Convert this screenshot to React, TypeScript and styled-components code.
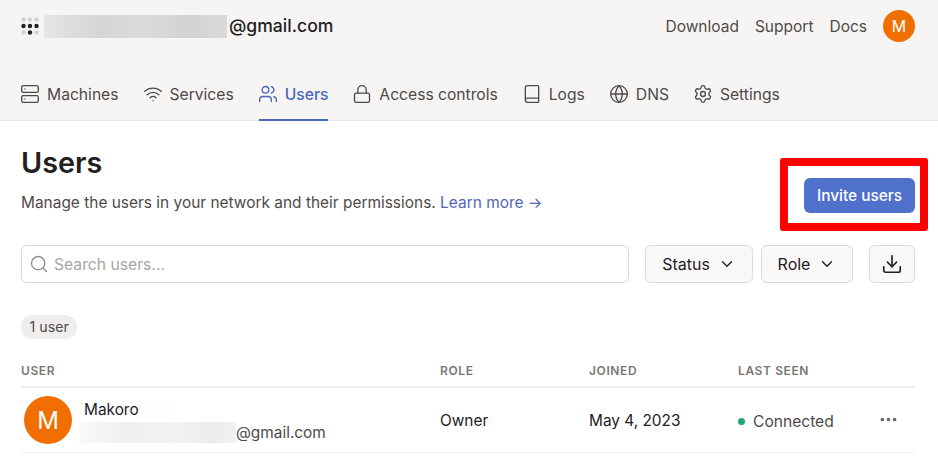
import React from 'react';
import styled, { createGlobalStyle } from 'styled-components';
import { Server, Wifi, Users, Lock, Book, Globe, Settings, Search, ChevronDown, Download, MoreHorizontal } from 'lucide-react';

const GlobalStyle = createGlobalStyle`
  html, body {
    margin: 0;
    height: 457px;
    overflow: hidden;
    background: #fff;
    font-family: Inter, "Liberation Sans", sans-serif;
    color: #24201f;
  }
`;

const Page = styled.div`
  position: relative;
  width: 938px;
  height: 457px;
  overflow: hidden;
`;

const Header = styled.header`
  height: 121px;
  box-sizing: border-box;
  background: #f6f5f4;
  border-bottom: 1px solid #e8e6e5;
  padding: 10px 23px 0 21px;
  display: flex;
  flex-direction: column;
`;

const TopRow = styled.div`
  display: flex;
  align-items: center;
  justify-content: space-between;
  height: 32px;
`;

const Account = styled.div`
  display: flex;
  align-items: center;
  font-size: 17.6px;
  font-weight: 500;
  color: #24201f;
`;

const AccountDomain = styled.span`
  margin-left: 2px;
  margin-top: -2px;
`;

const BlurEmail = styled.span<{ $width: number; $height: number; $soft?: boolean }>`
  display: inline-block;
  width: ${p => p.$width}px;
  height: ${p => p.$height}px;
  background: ${p =>
    p.$soft
      ? 'linear-gradient(90deg, #f9f9f9, #efefef 30%, #f2f2f2 60%, #ececec 85%, #f1f1f1)'
      : 'linear-gradient(90deg, #e6e5e4, #d6d5d4 30%, #dcdbda 55%, #d3d2d1 80%, #dadad9)'};
`;

const TopLinks = styled.nav`
  display: flex;
  align-items: center;
  gap: 16px;
  font-size: 15.5px;
  color: #4f4a48;
`;

const Avatar = styled.div<{ $size: number; $font: number }>`
  width: ${p => p.$size}px;
  height: ${p => p.$size}px;
  border-radius: 50%;
  flex: none;
  background: #f06f00;
  color: #fff;
  font-size: ${p => p.$font}px;
  display: flex;
  align-items: center;
  justify-content: center;
`;

const Tabs = styled.nav`
  display: flex;
  margin-top: auto;
  gap: 25px;
  height: 52px;
  margin-bottom: -1px;
`;

const Tab = styled.a<{ $active?: boolean }>`
  display: flex;
  align-items: center;
  gap: 7px;
  height: 52px;
  box-sizing: border-box;
  font-size: 15.65px;
  font-weight: ${p => (p.$active ? 500 : 400)};
  color: ${p => (p.$active ? '#4b68b8' : '#4f4a48')};
  border-bottom: 2px solid ${p => (p.$active ? '#4b68b8' : 'transparent')};

  svg {
    margin-left: -1px;
  }
`;

const Main = styled.main`
  padding: 23px 23px 0 21px;
`;

const TitleRow = styled.div`
  display: flex;
  justify-content: space-between;
  align-items: flex-start;
`;

const Title = styled.h1`
  margin: 0;
  font-size: 28.8px;
  line-height: 38px;
  font-weight: 600;
  color: #24201f;
`;

const Subtitle = styled.p`
  margin: 9px 0 0;
  font-size: 15.45px;
  line-height: 24px;
  color: #4f4a48;
`;

const LearnMore = styled.a`
  color: #5468b0;
`;

const InviteButton = styled.button`
  margin-top: 34px;
  width: 111px;
  height: 35px;
  border: none;
  border-radius: 6px;
  background: #4f71cc;
  color: #fff;
  font: 500 15.4px Inter, sans-serif;
  padding: 0;
`;

const Highlight = styled.div`
  position: absolute;
  left: 780px;
  top: 158px;
  width: 148px;
  height: 73px;
  box-sizing: border-box;
  border: 8px solid #fe0000;
  border-radius: 3px;
`;

const FilterRow = styled.div`
  display: flex;
  margin-top: 30px;
  gap: 8px;
`;

const SearchBox = styled.div`
  flex: none;
  width: 608px;
  height: 38px;
  box-sizing: border-box;
  margin-right: 8px;
  border: 1px solid #d9d7d6;
  border-radius: 6px;
  display: flex;
  align-items: center;
  gap: 5px;
  padding-left: 7px;
  font-size: 15.7px;
  color: #a9a5a3;
`;

const FilterButton = styled.button<{ $width: number }>`
  width: ${p => p.$width}px;
  height: 38px;
  box-sizing: border-box;
  border: 1px solid #dddbda;
  border-radius: 6px;
  background: #f9f8f7;
  color: #24201f;
  font: 400 16px Inter, sans-serif;
  display: flex;
  align-items: center;
  justify-content: center;
  gap: 8px;
  padding: 0;
`;

const ExportButton = styled(FilterButton)`
  margin-left: 8px;
`;

const CountBadge = styled.div`
  display: inline-block;
  margin-top: 32px;
  height: 24px;
  line-height: 24px;
  padding: 0 8.5px;
  border-radius: 12px;
  background: #f0eeed;
  color: #4f4a48;
  font-size: 14.2px;
`;

const Table = styled.div`
  margin-top: 23px;
  display: grid;
  grid-template-columns: 419px 149px 149px 1fr;
  width: 894px;
`;

const HeadCell = styled.div`
  height: 26px;
  box-sizing: border-box;
  border-bottom: 2px solid #eeedec;
  font-size: 12px;
  line-height: 18px;
  font-weight: 600;
  letter-spacing: 0.6px;
  color: #7b7674;
`;

const Cell = styled.div`
  height: 65px;
  box-sizing: border-box;
  border-bottom: 1px solid #eeedec;
  display: flex;
  align-items: center;
  font-size: 15.4px;
  color: #24201f;
  padding-top: 1px;
`;

const UserCell = styled(Cell)`
  gap: 12px;
  padding: 0 0 0 3px;
`;

const UserText = styled.div`
  display: flex;
  flex-direction: column;
  line-height: 23px;
  margin-top: 1px;
`;

const Name = styled.div`
  display: flex;
  align-items: center;
  gap: 1px;
`;

const FaintBlur = styled.span`
  width: 32px;
  height: 18px;
  background: #fdfdfd;
`;

const Email = styled.div`
  display: flex;
  align-items: center;
  margin-left: -5px;
  color: #4f4a48;
`;

const StatusCell = styled(Cell)`
  justify-content: space-between;
  color: #4f4a48;
  padding-top: 3px;
  font-size: 15.6px;
`;

const Status = styled.div`
  display: flex;
  align-items: center;
  gap: 8px;
`;

const Dot = styled.span`
  width: 7px;
  height: 7px;
  border-radius: 50%;
  background: #1fa971;
`;

const RowMenu = styled.div`
  display: flex;
  margin-right: 16px;
  margin-top: -4px;
  color: #6f6a68;
`;

const LogoGrid = styled.svg`
  margin-right: 5px;
  flex: none;
`;

const Logo = () => {
  const dots: [number, number, string][] = [
    [2.5, 2.5, '#d4d2d1'], [9, 2.5, '#d4d2d1'], [15.5, 2.5, '#d4d2d1'],
    [2.5, 9, '#24201f'], [9, 9, '#24201f'], [15.5, 9, '#24201f'],
    [2.5, 15.5, '#d4d2d1'], [9, 15.5, '#24201f'], [15.5, 15.5, '#d4d2d1'],
  ];
  return (
    <LogoGrid width="18" height="18" viewBox="0 0 18 18">
      {dots.map(([x, y, c], i) => (
        <circle key={i} cx={x} cy={y} r="2.2" fill={c} />
      ))}
    </LogoGrid>
  );
};

const tabs = [
  { label: 'Machines', icon: Server },
  { label: 'Services', icon: Wifi },
  { label: 'Users', icon: Users, active: true },
  { label: 'Access controls', icon: Lock },
  { label: 'Logs', icon: Book },
  { label: 'DNS', icon: Globe },
  { label: 'Settings', icon: Settings },
];

const App: React.FC = () => {
  return (
    <Page>
      <GlobalStyle />
      <Header>
        <TopRow>
          <Account>
            <Logo />
            <BlurEmail $width={183} $height={23} />
            <AccountDomain>@gmail.com</AccountDomain>
          </Account>
          <TopLinks>
            <span>Download</span>
            <span>Support</span>
            <span>Docs</span>
            <Avatar $size={32} $font={16}>M</Avatar>
          </TopLinks>
        </TopRow>
        <Tabs>
          {tabs.map(t => (
            <Tab key={t.label} $active={t.active}>
              <t.icon size={20} strokeWidth={1.6} />
              {t.label}
            </Tab>
          ))}
        </Tabs>
      </Header>
      <Main>
        <TitleRow>
          <div>
            <Title>Users</Title>
            <Subtitle>
              Manage the users in your network and their permissions.{' '}
              <LearnMore>Learn more →</LearnMore>
            </Subtitle>
          </div>
          <InviteButton>Invite users</InviteButton>
        </TitleRow>
        <FilterRow>
          <SearchBox>
            <Search size={20} strokeWidth={1.6} color="#8f8b89" />
            Search users...
          </SearchBox>
          <FilterButton $width={108}>
            Status <ChevronDown size={18} strokeWidth={1.8} />
          </FilterButton>
          <FilterButton $width={92}>
            Role <ChevronDown size={18} strokeWidth={1.8} />
          </FilterButton>
          <ExportButton $width={46}>
            <Download size={22} strokeWidth={1.8} />
          </ExportButton>
        </FilterRow>
        <CountBadge>1 user</CountBadge>
        <Table>
          <HeadCell>USER</HeadCell>
          <HeadCell>ROLE</HeadCell>
          <HeadCell>JOINED</HeadCell>
          <HeadCell>LAST SEEN</HeadCell>
          <UserCell>
            <Avatar $size={48} $font={24}>M</Avatar>
            <UserText>
              <Name>
                Makoro
                <FaintBlur />
              </Name>
              <Email>
                <BlurEmail $width={157} $height={21} $soft />
                @gmail.com
              </Email>
            </UserText>
          </UserCell>
          <Cell>Owner</Cell>
          <Cell>May 4, 2023</Cell>
          <StatusCell>
            <Status>
              <Dot />
              Connected
            </Status>
            <RowMenu>
              <MoreHorizontal size={21} strokeWidth={2.2} />
            </RowMenu>
          </StatusCell>
        </Table>
      </Main>
      <Highlight />
    </Page>
  );
};

export default App;
